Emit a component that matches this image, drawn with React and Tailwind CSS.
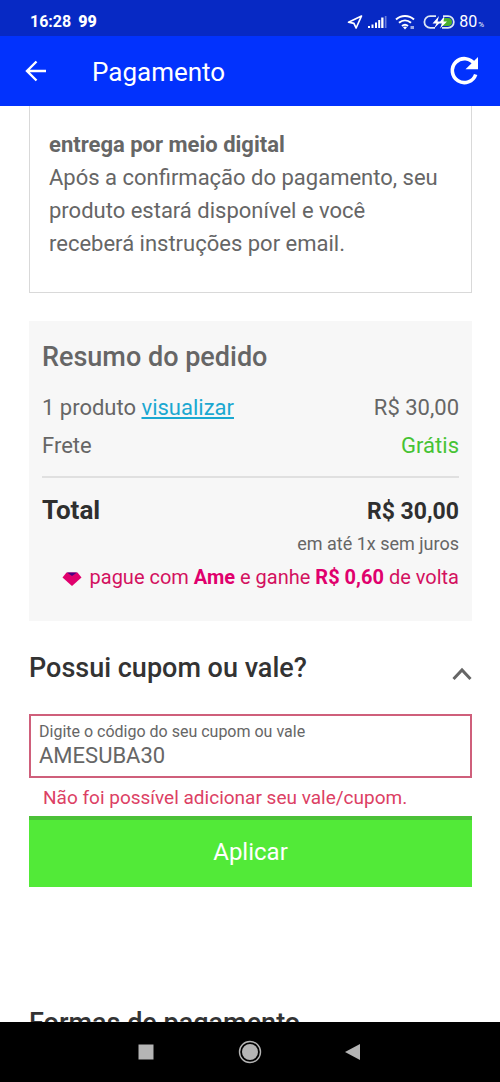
import { useState } from 'react';

function StatusBar() {
  return (
    <div className="flex h-9 shrink-0 items-center justify-between bg-[#0729c4] pl-[30px] pr-4 pt-2 text-white">
      <div className="flex items-center gap-[7px] text-base leading-5">
        <span className="font-bold">16:28</span>
        <span className="font-black">99</span>
      </div>
      <div className="flex items-center gap-1">
        <svg className="h-4 w-4" viewBox="0 0 16 16" fill="none" stroke="currentColor" strokeWidth="1.700" strokeLinejoin="round">
          <path d="M14.500 2 1.500 8.200l5.400 1.100 2.200 4.700z" />
        </svg>
        <svg className="h-4 w-5" viewBox="0 0 20 16" fill="currentColor">
          <path d="M1 12h2v2H1zM4.500 10.500h2V14h-2zM8 8.500h2V14H8zM11.200 6h2v8h-2z" />
          <path d="M14.200 3.500h2.300V14h-2.300z" />
          <path d="M17.800 2h1.700v12h-1.700z" opacity=".4" />
        </svg>
        <svg className="ml-1 h-4 w-5" viewBox="0 0 20 16" fill="none" stroke="currentColor" strokeWidth="2">
          <path d="M1 5.500c5-4.700 13-4.700 18 0" />
          <path d="M4 8.800c3.600-3.200 8.400-3.200 12 0" />
          <path d="M7 12c2-1.700 4-1.700 6 0" />
          <path d="m8 13.200 2 2.300 2-2.300c-1-1-3-1-4 0z" fill="currentColor" stroke="none" />
          <path d="M15.500 13.500H19" strokeWidth="3" opacity=".6" />
        </svg>
        <svg className="ml-1 h-4 w-8" viewBox="0 0 32 16" fill="none">
          <path d="M20 4h5a4 4 0 0 1 0 8h-7z" fill="#4cb02c" />
          <path d="M13 2.200H7.200a5.800 5.800 0 0 0 0 11.600H12M20 2.200h5a5.800 5.800 0 0 1 0 11.600h-6" stroke="#dbe6f5" strokeWidth="1.800" />
          <path d="m16 2-6.500 7.500h4L11 14.500l7-7h-3.500zM21.500 2 15.500 9.500h3.500l-2 5 7-7h-3.500z" fill="#fff" />
        </svg>
        <div className="flex items-baseline gap-px leading-5">
          <span className="text-base">80</span>
          <span className="text-[8px]">%</span>
        </div>
      </div>
    </div>
  );
}

function Header() {
  return (
    <header className="flex h-[70px] shrink-0 items-center bg-[#0232fd] pl-6 pr-5 text-white">
      <button type="button" aria-label="Voltar">
        <svg className="h-6 w-6" viewBox="0 0 24 24" fill="none" stroke="currentColor" strokeWidth="2.400">
          <path d="M22 12H3M12.500 2.500 3 12l9.500 9.500" />
        </svg>
      </button>
      <h1 className="ml-11 flex-1 pt-0.5 text-[26px] leading-8">Pagamento</h1>
      <button type="button" aria-label="Recarregar">
        <svg className="h-8 w-8" viewBox="0 0 32 32" fill="none">
          <path d="M26.500 9.200A12 12 0 1 0 27.700 19.500" stroke="currentColor" strokeWidth="3.600" />
          <path d="M30 2v12.300H17.500z" fill="currentColor" />
        </svg>
      </button>
    </header>
  );
}

function DeliveryInfo() {
  return (
    <section className="border border-t-0 border-[#d9d9d9] px-[19px] pb-8 pt-[22px] text-[22px] leading-[33px] text-[#666]">
      <h2 className="font-bold">entrega por meio digital</h2>
      <p>Após a confirmação do pagamento, seu produto estará disponível e você receberá instruções por email.</p>
    </section>
  );
}

function OrderSummary() {
  return (
    <section className="mt-7 bg-[#f7f7f7] px-[13px] pb-7 pt-5 text-[22px] leading-[38px] text-[#666]">
      <h2 className="mb-4 text-[27px] font-medium leading-8">Resumo do pedido</h2>
      <div className="flex justify-between">
        <span>
          1 produto <a href="#produtos" className="text-[#1ba8d1] underline">visualizar</a>
        </span>
        <span>R$ 30,00</span>
      </div>
      <div className="flex justify-between">
        <span>Frete</span>
        <span className="text-[#46c334]">Grátis</span>
      </div>
      <hr className="mb-3.5 mt-[11px] border-t-2 border-[#e0e0e0]" />
      <div className="flex items-center justify-between leading-8 text-[#2f2f2f]">
        <h3 className="text-[26px] font-bold">Total</h3>
        <strong className="pt-1 text-[23px]">R$ 30,00</strong>
      </div>
      <p className="mt-1 text-right text-[18px] leading-6">em até 1x sem juros</p>
      <p className="mt-[5px] flex items-center justify-end gap-2 text-[20px] leading-8 text-[#d3115f]">
        <svg className="mt-1 h-4 w-5" viewBox="0 0 20 16">
          <path d="M4.500 1.500h11L19.500 6.500 10 15 .5 6.500z" fill="#e0006d" />
          <path d="M5 1.500h10L10 5z" fill="#4b0082" />
        </svg>
        <span>
          pague com <b className="text-[#e0006d]">Ame</b> e ganhe <b className="text-[#e0006d]">R$ 0,60</b> de volta
        </span>
      </p>
    </section>
  );
}

function CouponForm() {
  const [code, setCode] = useState('AMESUBA30');

  return (
    <form className="pt-[31px]" onSubmit={(e) => e.preventDefault()}>
      <div className="flex items-center justify-between text-[#333]">
        <h2 className="text-[27px] font-medium leading-8">Possui cupom ou vale?</h2>
        <button type="button" aria-label="Recolher cupom" className="pt-3 text-[#666]">
          <svg className="h-4 w-5" viewBox="0 0 20 16" fill="none" stroke="currentColor" strokeWidth="3">
            <path d="m1.500 13 8.500-9 8.500 9" />
          </svg>
        </button>
      </div>
      <div className="mt-[30px] border-2 border-[#cf5f7b] px-2 pb-2 pt-1 text-[#666]">
        <label htmlFor="coupon" className="block text-base leading-6">Digite o código do seu cupom ou vale</label>
        <input
          id="coupon"
          value={code}
          onChange={(e) => setCode(e.target.value)}
          className="block h-6 w-full text-[22px] leading-6 outline-none"
        />
      </div>
      <p className="px-[14px] pb-1 pt-[6px] text-[19px] leading-7 text-[#dc4064]">Não foi possível adicionar seu vale/cupom.</p>
      <button type="submit" className="h-[71px] w-full border-t-4 border-[#4cc138] bg-[#52ea38] pb-1 text-[24px] text-white">
        Aplicar
      </button>
    </form>
  );
}

function NavigationBar() {
  return (
    <nav className="flex h-[60px] shrink-0 items-center justify-center gap-20 bg-black text-[#b5b5b5]">
      <button type="button" aria-label="Recentes">
        <svg className="h-6 w-6" viewBox="0 0 24 24" fill="currentColor">
          <path d="M4.500 4.500h15v15h-15z" />
        </svg>
      </button>
      <button type="button" aria-label="Início">
        <svg className="h-6 w-6" viewBox="0 0 24 24" fill="currentColor">
          <circle cx="12" cy="12" r="8" />
          <circle cx="12" cy="12" r="10.500" fill="none" stroke="currentColor" strokeWidth="1.400" />
        </svg>
      </button>
      <button type="button" aria-label="Voltar à tela anterior">
        <svg className="h-6 w-6" viewBox="0 0 24 24" fill="currentColor">
          <path d="M18 4v16L3 12z" />
        </svg>
      </button>
    </nav>
  );
}

export default function App() {
  return (
    <div className="flex h-dvh flex-col bg-white font-[Roboto,sans-serif]">
      <StatusBar />
      <Header />
      <main className="min-h-0 flex-1 overflow-hidden pl-[29px] pr-7">
        <DeliveryInfo />
        <OrderSummary />
        <CouponForm />
        <h2 className="mt-[120px] text-[27px] font-medium leading-8 text-[#333]">Formas de pagamento</h2>
      </main>
      <NavigationBar />
    </div>
  );
}
